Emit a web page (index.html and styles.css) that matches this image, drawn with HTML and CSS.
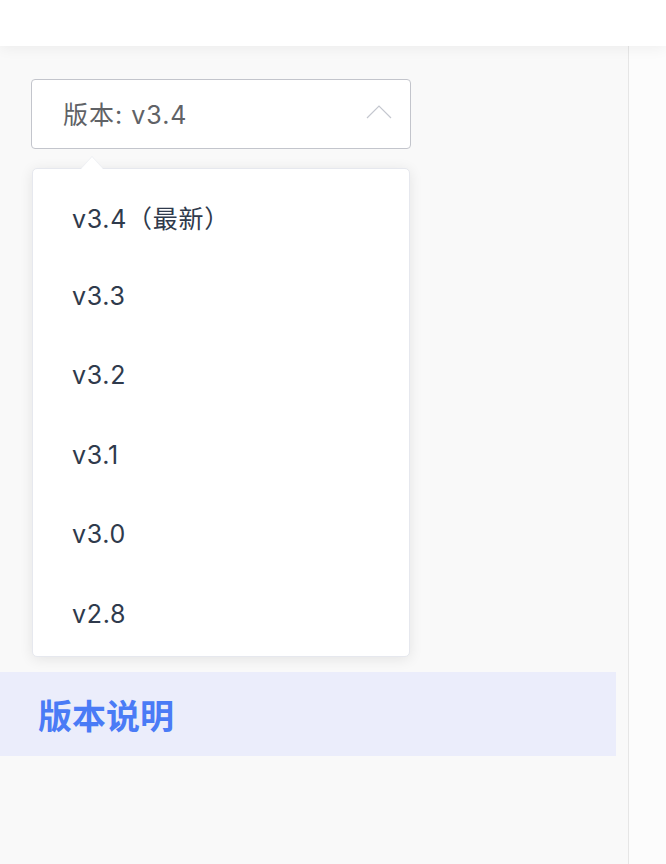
FILE: index.html
```html
<!DOCTYPE html>
<html lang="zh">
<head>
<meta charset="utf-8">
<link rel="stylesheet" href="styles.css">
</head>
<body>
<header class="topbar"></header>
<div class="layout">
  <aside class="sidebar">
    <div class="select-wrap">
      <div class="select">
        <span class="select-label">版本: v3.4</span>
        <svg class="chev" width="26" height="14" viewBox="0 0 26 14"><path d="M1 13 L13 1 L25 13" fill="none" stroke="#c4c7cf" stroke-width="1.2"/></svg>
      </div>
      <div class="dropdown">
        <span class="dropdown-arrow"></span>
        <ul class="options">
          <li>v3.4（最新）</li>
          <li>v3.3</li>
          <li>v3.2</li>
          <li>v3.1</li>
          <li>v3.0</li>
          <li>v2.8</li>
        </ul>
      </div>
    </div>
    <div class="nav-active">版本说明</div>
  </aside>
  <main class="content"></main>
</div>
</body>
</html>
```
FILE: styles.css
```css
* { box-sizing: border-box; }
html, body { margin: 0; padding: 0; }
body {
  width: 666px;
  height: 864px;
  overflow: hidden;
  font-family: Inter, "Noto Sans CJK SC", sans-serif;
  background: #fcfcfc;
}
.topbar {
  height: 46px;
  background: #fff;
  position: relative;
  z-index: 2;
  box-shadow: 0 2px 14px rgba(0,0,0,0.06);
}
.layout {
  display: flex;
  height: 818px;
}
.sidebar {
  width: 629px;
  background: #f9f9f9;
  border-right: 1px solid #e6e6e6;
  padding-right: 12px;
}
.content { flex: 1; background: #fcfcfc; }
.select-wrap {
  position: relative;
  padding: 33px 0 0 31px;
}
.select {
  width: 380px;
  height: 70px;
  background: #fff;
  border: 1px solid #c3c5cc;
  border-radius: 4px;
  display: flex;
  align-items: center;
  justify-content: space-between;
  padding: 0 18px 0 31px;
}
.select-label {
  font-size: 25px;
  letter-spacing: 1px;
  color: #606266;
  margin-top: -3px;
}
.chev { margin-top: -4px; }
.dropdown {
  position: absolute;
  left: 32px;
  top: 122px;
  width: 378px;
  background: #fff;
  border: 1px solid #e6e8ee;
  border-radius: 5px;
  box-shadow: 0 2px 14px rgba(0,0,0,0.09);
  z-index: 3;
}
.dropdown-arrow {
  position: absolute;
  left: 48px;
  top: -12px;
  width: 0;
  height: 0;
  border-left: 11px solid transparent;
  border-right: 11px solid transparent;
  border-bottom: 12px solid #fff;
  filter: drop-shadow(0 -1px 0 #eceef2);
}
.options {
  list-style: none;
  margin: 0;
  padding: 8px 0 3px;
}
.options li {
  height: 79.4px;
  display: flex;
  align-items: center;
  padding-left: 39px;
  font-size: 25px;
  letter-spacing: 0.7px;
  color: #2f3a4c;
}
.nav-active {
  margin-top: 523px;
  height: 84px;
  background: #ebedfb;
  display: flex;
  align-items: center;
  padding-left: 38px;
  font-size: 34px;
  font-weight: bold;
  color: #4a7bf6;
}
```
